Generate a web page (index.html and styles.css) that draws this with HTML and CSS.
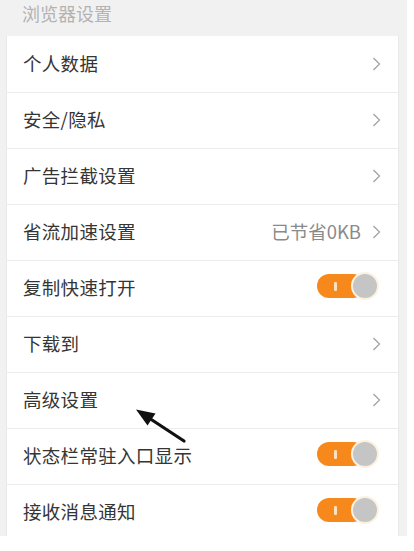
FILE: index.html
```html
<!DOCTYPE html>
<html lang="zh-CN">
<head>
<meta charset="utf-8">
<link rel="stylesheet" href="styles.css">
</head>
<body>
<div class="screen">
  <div class="section-title">浏览器设置</div>
  <div class="card">
    <div class="row"><span class="label">个人数据</span><span class="right"><svg class="chev" width="9" height="14" viewBox="0 0 9 14"><polyline points="1.5,1 7.5,7 1.5,13" fill="none" stroke="#a3a3a3" stroke-width="1.3"/></svg></span></div>
    <div class="row"><span class="label">安全/隐私</span><span class="right"><svg class="chev" width="9" height="14" viewBox="0 0 9 14"><polyline points="1.5,1 7.5,7 1.5,13" fill="none" stroke="#a3a3a3" stroke-width="1.3"/></svg></span></div>
    <div class="row"><span class="label">广告拦截设置</span><span class="right"><svg class="chev" width="9" height="14" viewBox="0 0 9 14"><polyline points="1.5,1 7.5,7 1.5,13" fill="none" stroke="#a3a3a3" stroke-width="1.3"/></svg></span></div>
    <div class="row"><span class="label">省流加速设置</span><span class="right"><span class="value">已节省0KB</span><svg class="chev" width="9" height="14" viewBox="0 0 9 14"><polyline points="1.5,1 7.5,7 1.5,13" fill="none" stroke="#a3a3a3" stroke-width="1.3"/></svg></span></div>
    <div class="row"><span class="label">复制快速打开</span><span class="toggle"><span class="track"><span class="mark"></span></span><span class="knob"></span></span></div>
    <div class="row"><span class="label">下载到</span><span class="right"><svg class="chev" width="9" height="14" viewBox="0 0 9 14"><polyline points="1.5,1 7.5,7 1.5,13" fill="none" stroke="#a3a3a3" stroke-width="1.3"/></svg></span></div>
    <div class="row"><span class="label">高级设置</span><span class="right"><svg class="chev" width="9" height="14" viewBox="0 0 9 14"><polyline points="1.5,1 7.5,7 1.5,13" fill="none" stroke="#a3a3a3" stroke-width="1.3"/></svg></span></div>
    <div class="row"><span class="label">状态栏常驻入口显示</span><span class="toggle"><span class="track"><span class="mark"></span></span><span class="knob"></span></span></div>
    <div class="row"><span class="label">接收消息通知</span><span class="toggle"><span class="track"><span class="mark"></span></span><span class="knob"></span></span></div>
  </div>
  <svg class="pointer" width="414" height="551" viewBox="0 0 414 551">
    <line x1="149" y1="418" x2="184" y2="441" stroke="#111" stroke-width="3.2" stroke-linecap="round"/>
    <polygon points="136,409.5 155.5,413.5 147.5,425.5" fill="#111"/>
  </svg>
</div>
</body>
</html>
```

FILE: styles.css
```css
html, body {
  margin: 0;
  padding: 0;
  background: #ffffff;
}

.screen {
  position: relative;
  width: 407px;
  height: 536px;
  overflow: hidden;
  background: #f1f1f1;
  font-family: "Noto Sans CJK SC", "Noto Sans", sans-serif;
}

.section-title {
  height: 36px;
  box-sizing: border-box;
  padding-top: 1px;
  padding-left: 22px;
  font-size: 18px;
  line-height: 24px;
  color: #b3b3b3;
}

.card {
  margin-left: 6px;
  width: 393px;
  background: #ffffff;
  border-left: 1px solid #e9e9e9;
  border-right: 1px solid #e9e9e9;
  box-sizing: border-box;
}

.row {
  height: 56px;
  box-sizing: border-box;
  border-top: 1px solid #ececec;
  display: flex;
  align-items: center;
  justify-content: space-between;
  padding-left: 16px;
  padding-right: 17px;
  padding-bottom: 3px;
}

.row:first-child {
  border-top: none;
}

.label {
  font-size: 18.5px;
  color: #353535;
  letter-spacing: 0.3px;
}

.right {
  display: flex;
  align-items: center;
}

.value {
  font-size: 18.5px;
  color: #8a8a8a;
  margin-right: 11px;
}

.chev {
  display: block;
  margin-top: 2px;
}

.toggle {
  display: flex;
  align-items: center;
  margin-right: 2px;
  margin-top: -2px;
}

.track {
  width: 48px;
  height: 24px;
  border-radius: 12px;
  background: #f7891c;
  display: flex;
  align-items: center;
  padding-left: 17px;
  box-sizing: border-box;
}

.mark {
  width: 2.5px;
  height: 9px;
  background: #fde2c0;
  border-radius: 1px;
}

.knob {
  width: 28px;
  height: 28px;
  box-sizing: border-box;
  border-radius: 50%;
  background: #c5c5c5;
  border: 2px solid #fdf1e2;
  margin-left: -14px;
}

.pointer {
  position: absolute;
  left: 0;
  top: 0;
  pointer-events: none;
}
```
